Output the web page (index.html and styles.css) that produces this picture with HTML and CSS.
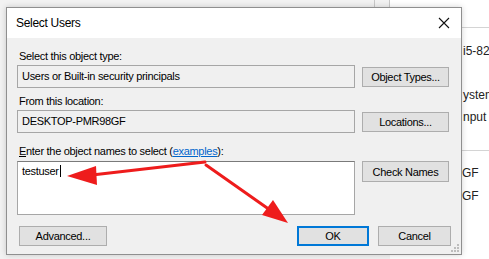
FILE: index.html
```html
<!DOCTYPE html>
<html>
  <head>
    <meta charset="utf-8" />
    <meta name="viewport" content="width=device-width, initial-scale=1" />
    <link rel="stylesheet" href="styles.css">
  </head>
  <body>
    <div class="desk">
      <div class="backwin">
        <div class="rule rule-top"></div>
        <div class="bline l1">i5-82</div>
        <div class="bline l2">ystem</div>
        <div class="bline l3">nput</div>
        <div class="rule rule-mid"></div>
        <div class="bline l4">GF</div>
        <div class="bline l5">GF</div>
      </div>
      <div class="vline v1"></div>
      <div class="vline v2"></div>

      <div class="dialog">
        <div class="titlebar">
          <span class="title">Select Users</span>
          <svg class="close" width="12" height="12" viewBox="0 0 12 12">
            <path d="M1 1 L11 11 M11 1 L1 11" stroke="#111" stroke-width="1.1" fill="none" />
          </svg>
        </div>
        <div class="body">
          <div class="label lbl-first">Select this object type:</div>
          <div class="row">
            <div class="field">Users or Built-in security principals</div>
            <button class="btn side">Object Types...</button>
          </div>

          <div class="label">From this location:</div>
          <div class="row">
            <div class="field">DESKTOP-PMR98GF</div>
            <button class="btn side">Locations...</button>
          </div>

          <div class="label lbl-names"><u>E</u>nter the object names to select (<a href="#">examples</a>):</div>
          <div class="row">
            <div class="names">testuser<span class="caret"></span></div>
            <button class="btn side top">Check Names</button>
          </div>

          <div class="footer">
            <button class="btn adv">Advanced...</button>
            <div class="right">
              <button class="btn ok">OK</button>
              <button class="btn cancel">Cancel</button>
            </div>
          </div>
        </div>
        <svg class="grip" width="8" height="8" viewBox="0 0 8 8">
          <rect x="6" y="0" width="2" height="2" fill="#bdbdbd" />
          <rect x="3" y="3" width="2" height="2" fill="#bdbdbd" />
          <rect x="6" y="3" width="2" height="2" fill="#bdbdbd" />
          <rect x="0" y="6" width="2" height="2" fill="#bdbdbd" />
          <rect x="3" y="6" width="2" height="2" fill="#bdbdbd" />
          <rect x="6" y="6" width="2" height="2" fill="#bdbdbd" />
        </svg>
      </div>

      <!-- red annotation arrows -->
      <svg class="arrows" width="489" height="259" viewBox="0 0 489 259">
        <line x1="205" y1="162" x2="92" y2="175" stroke="#ee1c1c" stroke-width="3" stroke-linecap="round" />
        <polygon points="67,176 96,166 97,185" fill="#ee1c1c" />
        <line x1="206" y1="165" x2="270" y2="210" stroke="#ee1c1c" stroke-width="3" stroke-linecap="round" />
        <polygon points="288,223 262,215 273,200" fill="#ee1c1c" />
      </svg>
    </div>
  </body>
</html>
```

FILE: styles.css
```css
html,
body {
  margin: 0;
  padding: 0;
}
body {
  width: 489px;
  height: 259px;
  overflow: hidden;
  background: #f2f2f2;
  font-family: "Liberation Sans", Arial, sans-serif;
  font-size: 11px;
  letter-spacing: -0.3px;
  color: #000;
}
.desk {
  position: relative;
  width: 489px;
  height: 259px;
}

/* window behind the dialog */
.backwin {
  position: absolute;
  left: 390px;
  top: 0;
  width: 99px;
  height: 259px;
  background: #fff;
}
.rule {
  position: absolute;
  left: 0;
  right: 0;
  height: 1px;
  background: #d4d4d4;
}
.rule-top {
  top: 27px;
}
.rule-mid {
  top: 150px;
}
.bline {
  position: absolute;
  font-size: 12px;
  letter-spacing: 0;
  color: #222;
  white-space: nowrap;
}
.l1 {
  left: 73px;
  top: 44px;
}
.l2 {
  left: 73px;
  top: 88px;
}
.l3 {
  left: 73px;
  top: 110px;
}
.l4 {
  left: 72px;
  top: 166px;
}
.l5 {
  left: 72px;
  top: 189px;
}
.vline {
  position: absolute;
  top: 0;
  width: 1px;
  height: 10px;
  background: #c8c8c8;
}
.v1 {
  left: 374px;
}
.v2 {
  left: 389px;
}

/* dialog */
.dialog {
  position: absolute;
  left: 6px;
  top: 7px;
  width: 454px;
  height: 246px;
  border: 1px solid #8f8f8f;
  background: #f0f0f0;
  box-shadow: 0 0 6px rgba(0, 0, 0, 0.18);
  display: flex;
  flex-direction: column;
}
.titlebar {
  height: 30px;
  background: #fff;
  display: flex;
  align-items: center;
  justify-content: space-between;
  padding: 0 9px 0 9px;
}
.title {
  font-size: 12px;
  letter-spacing: -0.3px;
  color: #000;
}
.close {
  margin-right: 2px;
}
.body {
  flex: 1;
  padding: 0 10px 0 10px;
  display: flex;
  flex-direction: column;
}
.label {
  height: 13px;
  line-height: 13px;
  padding-left: 2px;
  margin-top: 7px;
  margin-bottom: 2px;
  white-space: nowrap;
}
.lbl-first {
  margin-top: 12px;
}
.lbl-names {
  margin-top: 12px;
  margin-bottom: 3px;
}
.label a {
  color: #0066cc;
}
.row {
  display: flex;
  align-items: flex-start;
  gap: 7px;
}
.field {
  box-sizing: border-box;
  width: 338px;
  height: 23px;
  border: 1px solid #a6a6a6;
  background: #f0f0f0;
  padding-left: 4px;
  line-height: 21px;
  white-space: nowrap;
}
.names {
  box-sizing: border-box;
  width: 338px;
  height: 54px;
  border: 1px solid #a6a6a6;
  border-top-color: #7a7a7a;
  background: #fff;
  padding: 3px 4px;
  line-height: 13px;
}
.caret {
  display: inline-block;
  width: 1px;
  height: 12px;
  background: #000;
  vertical-align: -2px;
  margin-left: 1px;
}
.btn {
  box-sizing: border-box;
  height: 20px;
  border: 1px solid #adadad;
  background: #e1e1e1;
  font-family: "Liberation Sans", Arial, sans-serif;
  font-size: 11px;
  letter-spacing: -0.3px;
  color: #000;
  padding: 0;
  margin: 0;
}
.side {
  width: 87px;
  margin-top: 2px;
}
.side.top {
  margin-top: 0;
  height: 21px;
}
.footer {
  margin-top: 11px;
  display: flex;
  justify-content: space-between;
}
.adv {
  width: 88px;
  margin-left: 2px;
}
.right {
  display: flex;
  gap: 9px;
}
.ok {
  width: 72px;
  border: 2px solid #0078d7;
}
.cancel {
  width: 73px;
}
.grip {
  position: absolute;
  right: 2px;
  bottom: 2px;
}

.arrows {
  position: absolute;
  left: 0;
  top: 0;
  pointer-events: none;
}
```
